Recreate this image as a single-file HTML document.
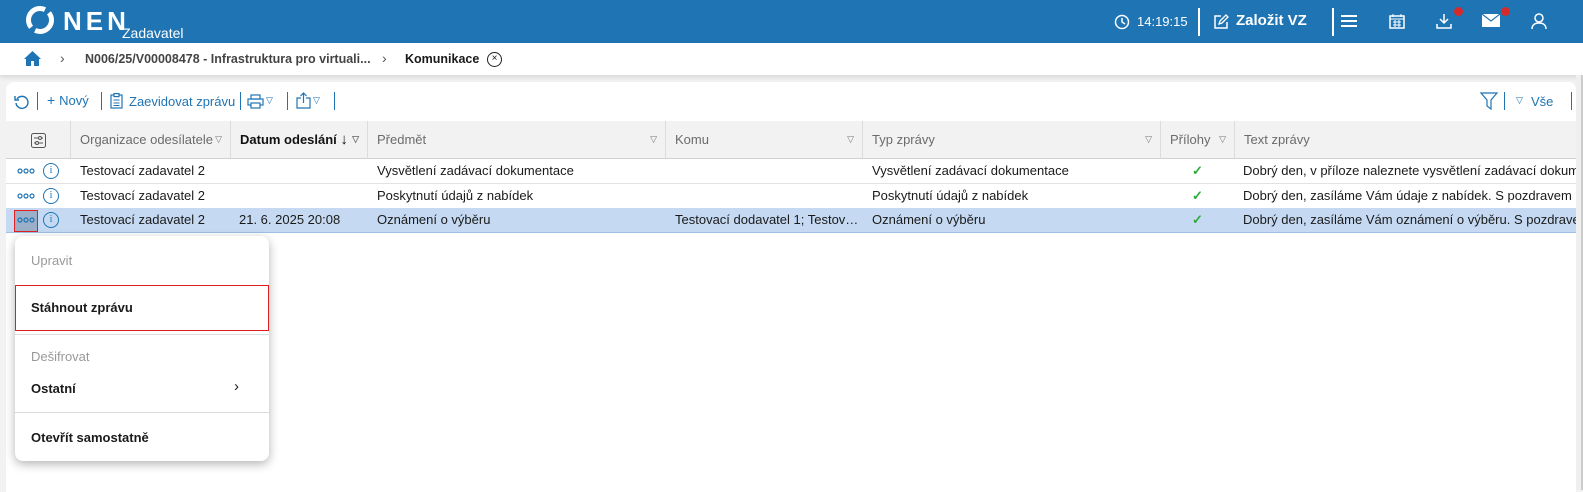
<!DOCTYPE html>
<html><head><meta charset="utf-8"><style>
*{margin:0;padding:0;box-sizing:border-box}
body{width:1583px;height:490px;overflow:hidden;background:#f2f2f2;font-family:"Liberation Sans",Arial,sans-serif;font-size:13px;color:#1a1a1a;position:relative}
.a{position:absolute}
.top{left:0;top:0;width:1583px;height:43px;background:#1f74b4;color:#fff}
.bc{left:0;top:43px;width:1583px;height:32px;background:#fff;box-shadow:0 2px 5px rgba(0,0,0,.12)}
.card{left:6px;top:82px;width:1570px;height:410px;background:#fff;border-radius:8px 8px 0 0;overflow:hidden}
.blue{color:#1f74b4}
.th{position:absolute;top:39px;height:38px;background:#f2f2f2;border-right:1px solid #dcdcdc;border-bottom:1px solid #d0d0d0;color:#6b6b6b;line-height:37px;padding-left:9px}
.tri{position:absolute;right:8px;top:0;font-size:9px;color:#777}
.row{position:absolute;left:0;width:1570px;height:25px;border-bottom:1px solid #e2e2e2;line-height:24px}
.c{position:absolute;top:0;white-space:nowrap;overflow:hidden}
.sep{position:absolute;width:1px;background:#1f74b4}
.menu{left:15px;top:236px;width:254px;height:225px;background:#fff;border-radius:8px;box-shadow:0 3px 10px rgba(0,0,0,.3);font-size:13px}
.mi{position:absolute;left:16px}
.hr{position:absolute;left:0;width:254px;height:1px;background:#dcdcdc}
.dots{position:absolute;left:11px;top:9px}
</style></head><body>
<div class="a top">
 <svg class="a" style="left:25px;top:5px" width="30" height="30" viewBox="0 0 30 30"><circle cx="15" cy="15" r="11.5" fill="none" stroke="#fff" stroke-width="5" stroke-dasharray="31 5" stroke-dashoffset="8"/></svg>
 <div class="a" style="left:63px;top:6px;font-size:26px;font-weight:bold;letter-spacing:4px">NEN</div>
 <div class="a" style="left:122px;top:25px;font-size:14px">Zadavatel</div>
 <svg class="a" style="left:1114px;top:14px" width="16" height="16" viewBox="0 0 16 16"><circle cx="8" cy="8" r="6.5" fill="none" stroke="#fff" stroke-width="1.5"/><path d="M8 4v4l3 2" stroke="#fff" stroke-width="1.5" fill="none"/></svg>
 <div class="a" style="left:1137px;top:14px;font-size:13px">14:19:15</div>
 <div class="a" style="left:1198px;top:8px;width:2px;height:28px;background:#fff"></div>
 <svg class="a" style="left:1212px;top:13px" width="18" height="18" viewBox="0 0 18 18"><path d="M9 3H3v12h12V9" stroke="#fff" stroke-width="1.5" fill="none"/><path d="M7 11l1-3 6-6 2 2-6 6z" stroke="#fff" stroke-width="1.3" fill="none"/></svg>
 <div class="a" style="left:1236px;top:12px;font-size:15px;font-weight:bold">Založit VZ</div>
 <div class="a" style="left:1332px;top:8px;width:2px;height:28px;background:#fff"></div>
 <div class="a" style="left:1341px;top:15px;width:16px;height:2px;background:#fff;box-shadow:0 5px 0 #fff,0 10px 0 #fff"></div>
 <svg class="a" style="left:1389px;top:13px" width="16" height="16" viewBox="0 0 16 16"><rect x="1" y="3" width="14" height="12" fill="none" stroke="#fff" stroke-width="1.5"/><path d="M4 1v3M12 1v3M1 6h14M4 9h8M4 12h8M6 7v7M10 7v7" stroke="#fff" stroke-width="1"/></svg>
 <svg class="a" style="left:1435px;top:12px" width="18" height="18" viewBox="0 0 18 18"><path d="M9 2v9M5 7l4 4 4-4M2 12v4h14v-4" stroke="#fff" stroke-width="1.5" fill="none"/></svg>
 <div class="a" style="left:1454px;top:7px;width:9px;height:9px;border-radius:50%;background:#d42a2a"></div>
 <svg class="a" style="left:1482px;top:14px" width="18" height="13" viewBox="0 0 18 13"><rect x="0" y="0" width="18" height="13" fill="#fff"/><path d="M0 0l9 7 9-7" stroke="#1f74b4" stroke-width="1.2" fill="none"/></svg>
 <div class="a" style="left:1501px;top:7px;width:9px;height:9px;border-radius:50%;background:#d42a2a"></div>
 <svg class="a" style="left:1530px;top:12px" width="18" height="18" viewBox="0 0 18 18"><circle cx="9" cy="6" r="4" fill="none" stroke="#fff" stroke-width="1.5"/><path d="M2 17c0-4 3-6 7-6s7 2 7 6" stroke="#fff" stroke-width="1.5" fill="none"/></svg>
</div>
<div class="a bc">
 <svg class="a" style="left:24px;top:8px" width="17" height="15" viewBox="0 0 17 15"><path d="M8.5 0L0 8h2v7h5v-5h3v5h5V8h2z" fill="#1f74b4"/></svg>
 <div class="a" style="left:60px;top:7px;color:#555;font-size:14px">›</div>
 <div class="a" style="left:85px;top:9px;color:#444;font-weight:bold;font-size:12.5px">N006/25/V00008478 - Infrastruktura pro virtuali...</div>
 <div class="a" style="left:382px;top:7px;color:#555;font-size:14px">›</div>
 <div class="a" style="left:405px;top:9px;font-weight:bold;font-size:12.5px">Komunikace</div>
 <div class="a" style="left:487px;top:9px;width:15px;height:15px;border:1.3px solid #222;border-radius:50%;font-size:10px;line-height:12px;text-align:center">×</div>
</div>
<div class="a" style="left:1576px;top:75px;width:7px;height:415px;background:#efefef;border-right:2px solid #ccc"></div>
<div class="a card">
 <svg class="a" style="left:8px;top:12px" width="16" height="16" viewBox="0 0 16 16"><path d="M3 5A6 6 0 1 1 2 9" stroke="#1f74b4" stroke-width="1.4" fill="none"/><path d="M1 2v4h4" stroke="#1f74b4" stroke-width="1.4" fill="none"/></svg>
 <div class="sep" style="left:31px;top:10px;height:18px"></div>
 <div class="a blue" style="left:41px;top:10px;font-size:14px">+ <span style="font-size:13px">Nový</span></div>
 <div class="sep" style="left:95px;top:10px;height:18px"></div>
 <svg class="a" style="left:104px;top:11px" width="13" height="16" viewBox="0 0 13 16"><rect x="1" y="2" width="11" height="13" fill="none" stroke="#1f74b4" stroke-width="1.2"/><rect x="4" y="0.6" width="5" height="3" fill="#fff" stroke="#1f74b4" stroke-width="1.2"/><path d="M3.5 7h6M3.5 10h6M3.5 12.5h6" stroke="#1f74b4"/></svg>
 <div class="a blue" style="left:123px;top:12px">Zaevidovat zprávu</div>
 <div class="sep" style="left:234px;top:10px;height:18px"></div>
 <svg class="a" style="left:241px;top:12px" width="17" height="15" viewBox="0 0 17 15"><rect x="4" y="1" width="9" height="4" fill="none" stroke="#1f74b4" stroke-width="1.2"/><rect x="1" y="5" width="15" height="6" fill="none" stroke="#1f74b4" stroke-width="1.2"/><rect x="4" y="9" width="9" height="5" fill="#fff" stroke="#1f74b4" stroke-width="1.2"/></svg>
 <div class="a blue" style="left:260px;top:13px;font-size:9px">▽</div>
 <div class="sep" style="left:281px;top:10px;height:18px"></div>
 <svg class="a" style="left:290px;top:10px" width="15" height="17" viewBox="0 0 15 17"><path d="M5 6H1v10h13V6h-4M7.5 11V1M4.5 4l3-3 3 3" stroke="#1f74b4" stroke-width="1.2" fill="none"/></svg>
 <div class="a blue" style="left:307px;top:13px;font-size:9px">▽</div>
 <div class="sep" style="left:328px;top:10px;height:18px"></div>
 <svg class="a" style="left:1474px;top:10px" width="18" height="18" viewBox="0 0 18 18"><path d="M1 1h16l-6 7v9l-4-3V8z" stroke="#1f74b4" stroke-width="1.2" fill="none"/></svg>
 <div class="sep" style="left:1498px;top:10px;height:18px"></div>
 <div class="a blue" style="left:1510px;top:13px;font-size:9px">▽</div>
 <div class="a blue" style="left:1525px;top:12px">Vše</div>
 <div class="sep" style="left:1565px;top:10px;height:18px"></div>

 <div class="th" style="left:0;width:65px;padding:0"><svg class="a" style="left:25px;top:12px" width="15" height="15" viewBox="0 0 15 15"><rect x="0.5" y="0.5" width="14" height="14" rx="2" fill="none" stroke="#555"/><path d="M3 5h9M3 10h9" stroke="#555"/><circle cx="9" cy="5" r="1.5" fill="#f2f2f2" stroke="#555"/><circle cx="6" cy="10" r="1.5" fill="#f2f2f2" stroke="#555"/></svg></div>
 <div class="th" style="left:65px;width:160px">Organizace odesílatele<span class="tri">▽</span></div>
 <div class="th" style="left:225px;width:137px;color:#111;font-weight:bold">Datum odeslání <span style="font-weight:normal;font-size:15px">↓</span><span class="tri">▽</span></div>
 <div class="th" style="left:362px;width:298px">Předmět<span class="tri">▽</span></div>
 <div class="th" style="left:660px;width:197px">Komu<span class="tri">▽</span></div>
 <div class="th" style="left:857px;width:298px">Typ zprávy<span class="tri">▽</span></div>
 <div class="th" style="left:1155px;width:74px">Přílohy<span class="tri">▽</span></div>
 <div class="th" style="left:1229px;width:341px;border-right:0">Text zprávy</div>

 <div class="row" style="top:77px">
  <svg class="dots" width="18" height="6" viewBox="0 0 18 6"><circle cx="3" cy="3" r="2" fill="none" stroke="#1f74b4" stroke-width="1.2"/><circle cx="9" cy="3" r="2" fill="none" stroke="#1f74b4" stroke-width="1.2"/><circle cx="15" cy="3" r="2" fill="none" stroke="#1f74b4" stroke-width="1.2"/></svg>
  <div class="c" style="left:37px;top:4px;width:16px;height:16px;border:1.3px solid #1f74b4;border-radius:50%;color:#1f74b4;font-size:10px;line-height:13px;text-align:center;font-family:'Liberation Serif'">i</div>
  <div class="c" style="left:74px">Testovací zadavatel 2</div>
  <div class="c" style="left:371px">Vysvětlení zadávací dokumentace</div>
  <div class="c" style="left:866px">Vysvětlení zadávací dokumentace</div>
  <div class="c" style="left:1186px;color:#2eaa3a;font-weight:bold">✓</div>
  <div class="c" style="left:1237px;width:333px">Dobrý den, v příloze naleznete vysvětlení zadávací dokumentace</div>
 </div>
 <div class="row" style="top:102px">
  <svg class="dots" width="18" height="6" viewBox="0 0 18 6"><circle cx="3" cy="3" r="2" fill="none" stroke="#1f74b4" stroke-width="1.2"/><circle cx="9" cy="3" r="2" fill="none" stroke="#1f74b4" stroke-width="1.2"/><circle cx="15" cy="3" r="2" fill="none" stroke="#1f74b4" stroke-width="1.2"/></svg>
  <div class="c" style="left:37px;top:4px;width:16px;height:16px;border:1.3px solid #1f74b4;border-radius:50%;color:#1f74b4;font-size:10px;line-height:13px;text-align:center;font-family:'Liberation Serif'">i</div>
  <div class="c" style="left:74px">Testovací zadavatel 2</div>
  <div class="c" style="left:371px">Poskytnutí údajů z nabídek</div>
  <div class="c" style="left:866px">Poskytnutí údajů z nabídek</div>
  <div class="c" style="left:1186px;color:#2eaa3a;font-weight:bold">✓</div>
  <div class="c" style="left:1237px;width:333px">Dobrý den, zasíláme Vám údaje z nabídek. S pozdravem</div>
 </div>
 <div class="row" style="top:126px;background:#c5daf2;border-bottom:1px solid #9fc0e6">
  <div class="c" style="left:8px;top:2px;width:24px;height:22px;background:#9bb0c8;border:1px solid #e02020"></div>
  <svg class="dots" width="18" height="6" viewBox="0 0 18 6"><circle cx="3" cy="3" r="2" fill="none" stroke="#1f74b4" stroke-width="1.2"/><circle cx="9" cy="3" r="2" fill="none" stroke="#1f74b4" stroke-width="1.2"/><circle cx="15" cy="3" r="2" fill="none" stroke="#1f74b4" stroke-width="1.2"/></svg>
  <div class="c" style="left:37px;top:4px;width:16px;height:16px;border:1.3px solid #1f74b4;border-radius:50%;color:#1f74b4;font-size:10px;line-height:13px;text-align:center;font-family:'Liberation Serif'">i</div>
  <div class="c" style="left:74px">Testovací zadavatel 2</div>
  <div class="c" style="left:233px">21. 6. 2025 20:08</div>
  <div class="c" style="left:371px">Oznámení o výběru</div>
  <div class="c" style="left:669px">Testovací dodavatel 1; Testov…</div>
  <div class="c" style="left:866px">Oznámení o výběru</div>
  <div class="c" style="left:1186px;color:#2eaa3a;font-weight:bold">✓</div>
  <div class="c" style="left:1237px;width:333px">Dobrý den, zasíláme Vám oznámení o výběru. S pozdravem</div>
 </div>
</div>
<div class="a menu">
 <div class="mi" style="top:17px;color:#999">Upravit</div>
 <div class="a" style="left:0;top:49px;width:254px;height:46px;border:1px solid #e02020"></div>
 <div class="mi" style="top:64px;font-weight:bold">Stáhnout zprávu</div>
 <div class="hr" style="top:98px"></div>
 <div class="mi" style="top:113px;color:#999">Dešifrovat</div>
 <div class="mi" style="top:145px;font-weight:bold">Ostatní</div>
 <div class="a" style="left:219px;top:142px;font-size:15px">›</div>
 <div class="hr" style="top:176px"></div>
 <div class="mi" style="top:194px;font-weight:bold">Otevřít samostatně</div>
</div>
</body></html>
